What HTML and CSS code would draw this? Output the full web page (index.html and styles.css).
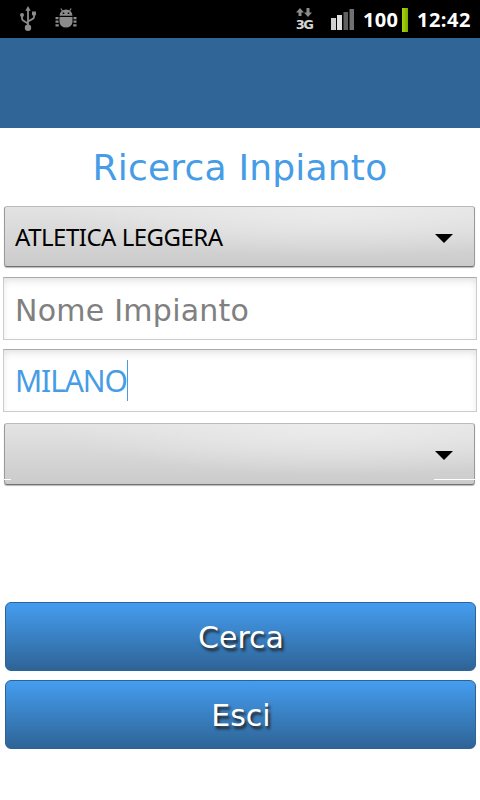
FILE: index.html
```html
<!DOCTYPE html>
<html lang="it">
<head>
    <meta charset="UTF-8">
    <meta name="viewport" content="width=device-width, initial-scale=1.0">
    <title>Ricerca Inpianto</title>
    <link rel="stylesheet" href="styles.css">
</head>
<body>
    <div class="status-bar">
        <svg class="icon-usb" width="18" height="26" viewBox="0 0 18 26" fill="none" stroke="#8c8c8c" stroke-width="1.8">
            <path d="M9 4v17M3 10v2.5q0 1.5 1.5 2.3L9 17.5M15 8v3q0 1.2-1.3 1.9L9 15.5"/>
            <path d="M9 0l2.700 4.800H6.300z" fill="#8c8c8c" stroke="none"/>
            <circle cx="9" cy="21.8" r="3.2" fill="#8c8c8c" stroke="none"/>
            <circle cx="3" cy="9" r="2" fill="#8c8c8c" stroke="none"/>
            <path d="M13 5.500h4v3.800h-4z" fill="#8c8c8c" stroke="none"/>
        </svg>
        <svg class="icon-debug" width="22" height="22" viewBox="0 0 22 22" fill="#8c8c8c">
            <path d="M4.500 7.700a6.500 6.200 0 0 1 13 0zM4.500 9h13v5a6.500 5.600 0 0 1-13 0z"/>
            <path d="M7.500 3L5.800 .5M14.500 3L16.200 .5" stroke="#8c8c8c" stroke-width="1.2"/>
            <path d="M.5 9H3.500v2.200H.5zM.5 12.500H3.500v2.200H.5zM.5 16.200H3.800v2.200H.5zM18.500 9h3v2.200h-3zM18.500 12.500h3v2.200h-3zM18.200 16.200h3.300v2.200h-3.300z"/>
            <path d="M7.700 4.500h1.600v1.600H7.700zM12.700 4.500h1.600v1.600h-1.600z" fill="#000"/>
        </svg>
        <div class="network">
            <svg width="16" height="10" viewBox="0 0 16 10" fill="#8c8c8c">
                <path d="M4 0L8 4.500H5.500V8H2.500V4.500H0zM10.500 0h3v4.500H16L12 9 8 4.500h2.500z"/>
            </svg>
            <span class="network-type">3G</span>
        </div>
        <svg class="icon-signal" width="24" height="21" viewBox="0 0 24 21">
            <path d="M0 9h5v12H0z" fill="#d0d0d0"/>
            <path d="M6 6h5v15H6z" fill="#e0e0e0"/>
            <path d="M12.500 3H17v18h-4.500z" fill="#606060"/>
            <path d="M18.500 0H23v21h-4.500z" fill="#707070"/>
        </svg>
        <span class="battery-level">100</span>
        <span class="battery"></span>
        <span class="clock">12:42</span>
    </div>

    <div class="header"></div>

    <div class="content">
        <h1>Ricerca Inpianto</h1>

        <div class="spinner">
            <span class="spinner-text">ATLETICA LEGGERA</span>
            <svg class="arrow" width="18" height="9" viewBox="0 0 18 9"><path d="M0 0h18L9 9z"/></svg>
        </div>

        <div class="field">
            <span class="hint">Nome Impianto</span>
        </div>

        <div class="field">
            <span class="value">MILANO</span>
            <span class="caret"></span>
        </div>

        <div class="spinner empty">
            <svg class="arrow" width="18" height="9" viewBox="0 0 18 9"><path d="M0 0h18L9 9z"/></svg>
        </div>

        <div class="actions">
            <button class="btn">Cerca</button>
            <button class="btn">Esci</button>
        </div>
    </div>
</body>
</html>
```

FILE: styles.css
```css
* {
    box-sizing: border-box;
}
body {
    margin: 0;
    height: 800px;
    background: white;
    font-family: "DejaVu Sans", sans-serif;
    overflow: hidden;
}
.status-bar {
    display: flex;
    align-items: flex-start;
    height: 38px;
    background: black;
    color: white;
    font-family: "Open Sans", sans-serif;
    font-size: 20px;
    font-weight: bold;
    line-height: 40px;
}
.icon-usb {
    margin: 6px 0 0 19px;
}
.icon-debug {
    margin: 8px 0 0 18px;
}
.network {
    display: flex;
    flex-direction: column;
    align-items: center;
    width: 18px;
    margin: 8px 17px 0 218px;
}
.network-type {
    font-family: "DejaVu Sans", sans-serif;
    font-size: 13px;
    line-height: 13px;
    letter-spacing: -1.5px;
    color: #d5d5d5;
}
.icon-signal {
    margin: 9px 8px 0 1px;
}
.battery-level {
    width: 36px;
    letter-spacing: 0.3px;
}
.battery {
    width: 6px;
    height: 24px;
    margin: 8px 9px 0 3px;
    background: linear-gradient(to right, #a6d80c, #7fa800);
}
.clock {
    letter-spacing: 0.5px;
}
.header {
    height: 90px;
    background: #306598;
}
.content {
    display: flex;
    flex-direction: column;
    padding: 0 3px;
}
h1 {
    margin: 0;
    height: 78px;
    font-size: 36px;
    font-weight: normal;
    line-height: 80px;
    letter-spacing: 0.2px;
    text-align: center;
    color: #469ce6;
}
.spinner {
    display: flex;
    align-items: center;
    justify-content: space-between;
    height: 61px;
    margin: 0 2px 10px 1px;
    padding: 2px 21px 0 10px;
    border: 1px solid #999;
    border-top-color: #bbb;
    border-bottom-color: #707070;
    border-radius: 3px;
    background: radial-gradient(ellipse at 70% 0, #ececec 0%, rgba(236,236,236,0) 60%), linear-gradient(#e3e3e3, #cbcbcb);
    box-shadow: 0 1px 1px #bbb;
}
.spinner-text {
    padding-bottom: 2px;
    font-family: "Noto Sans", sans-serif;
    font-size: 24px;
    line-height: 32px;
    letter-spacing: -0.5px;
}
.arrow {
    margin-top: 1px;
}
.field {
    display: flex;
    align-items: center;
    height: 63px;
    margin-bottom: 9px;
    padding-left: 11px;
    border: 1px solid #ccc;
    border-top-color: #aaa;
    background: white;
    box-shadow: inset 0 4px 8px -2px #ddd;
}
.hint {
    padding-top: 4px;
    font-size: 30px;
    letter-spacing: 0.25px;
    color: #808080;
}
.value {
    font-family: "Noto Sans", sans-serif;
    font-size: 30px;
    letter-spacing: -1.1px;
    color: #469ce6;
}
.caret {
    width: 1px;
    height: 41px;
    margin-top: -1px;
    background: #469ce6;
}
.empty {
    position: relative;
    justify-content: flex-end;
    height: 62px;
    margin-top: 2px;
}
.empty::before,
.empty::after {
    content: "";
    position: absolute;
    bottom: 4px;
    height: 1px;
    background: white;
}
.empty::before {
    left: -1px;
    width: 7px;
}
.empty::after {
    right: -1px;
    width: 41px;
}
.actions {
    display: flex;
    flex-direction: column;
    gap: 9px;
    margin: 107px 1px 0 2px;
}
.btn {
    height: 69px;
    padding: 2px 0 0 1px;
    border: 1px solid #2d6397;
    border-radius: 6px;
    background: linear-gradient(#459df0, #2e6496);
    color: white;
    font-family: "DejaVu Sans", sans-serif;
    font-size: 30px;
    text-shadow: 2px 3px 3px #222;
}
```
